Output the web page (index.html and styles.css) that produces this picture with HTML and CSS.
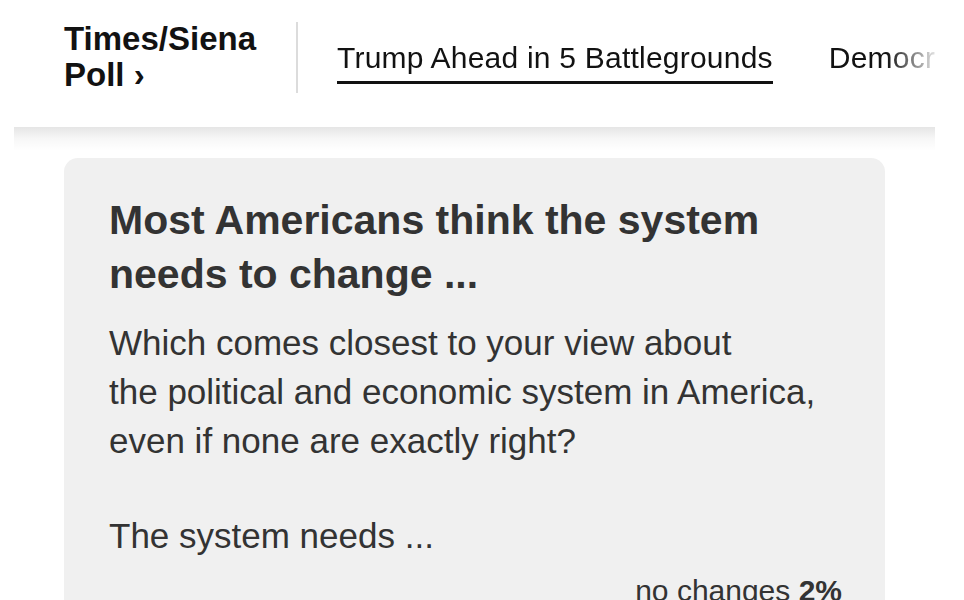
FILE: index.html
```html
<!DOCTYPE html>
<html lang="en">
<head>
<meta charset="utf-8">
<title>Times/Siena Poll</title>
<link rel="stylesheet" href="styles.css">
</head>
<body>
<div class="page">
  <header class="topbar">
    <a class="brand" href="#">Times/Siena<br>Poll <span class="chev">›</span></a>
    <div class="divider"></div>
    <nav class="tabs">
      <a class="tab active" href="#">Trump Ahead in 5 Battlegrounds</a>
      <a class="tab" href="#">Democrats’ Worries</a>
    </nav>
  </header>
  <section class="card">
    <h2 class="card-title">Most Americans think the system needs to change ...</h2>
    <p class="question">Which comes closest to your view about<br>the political and economic system in America,<br>even if none are exactly right?</p>
    <p class="lead">The system needs ...</p>
    <div class="result-label">no changes <b>2%</b></div>
  </section>
</div>
</body>
</html>
```
FILE: styles.css
```css
* { box-sizing: border-box; }
html, body { margin: 0; padding: 0; background: #fff; }
body {
  font-family: "Liberation Sans", Arial, sans-serif;
  color: #121212;
  overflow: hidden;
}
.page {
  padding: 0 29px 0 14px;
}
.topbar {
  position: relative;
  z-index: 2;
  height: 127px;
  background: #fff;
  display: flex;
  align-items: flex-start;
  padding: 21px 0 0 50px;
}
.topbar::after {
  content: "";
  position: absolute;
  left: 0;
  right: 0;
  top: 100%;
  height: 24px;
  background: linear-gradient(to bottom, rgba(0, 0, 0, 0.1), rgba(0, 0, 0, 0.03) 50%, rgba(0, 0, 0, 0));
  pointer-events: none;
}
.brand {
  flex: none;
  font-size: 33px;
  line-height: 36px;
  font-weight: 700;
  color: #121212;
  text-decoration: none;
}
.chev { font-weight: 700; }
.divider {
  flex: none;
  width: 2px;
  height: 71px;
  margin: 1px 39px 0 40px;
  background: #dcdcdc;
}
.tabs {
  flex: 1;
  min-width: 0;
  display: flex;
  gap: 56px;
  overflow: hidden;
  white-space: nowrap;
  padding-top: 19px;
  -webkit-mask-image: linear-gradient(to right, #000 calc(100% - 48px), rgba(0,0,0,0.12) 100%);
  mask-image: linear-gradient(to right, #000 calc(100% - 48px), rgba(0,0,0,0.12) 100%);
}
.tab {
  flex: none;
  font-size: 30px;
  line-height: 36px;
  letter-spacing: 0.22px;
  color: #121212;
  text-decoration: none;
  padding-bottom: 5px;
  border-bottom: 3px solid transparent;
}
.tab.active { border-bottom-color: #121212; }
.card {
  margin: 31px 50px 0 50px;
  background: #f0f0f0;
  border-radius: 14px;
  padding: 35px 43px 40px 45px;
  color: #333;
  min-height: 500px;
}
.card-title {
  margin: 0;
  font-size: 41px;
  line-height: 54px;
  font-weight: 700;
  color: #333;
}
.question {
  margin: 17px 0 0 0;
  font-size: 35px;
  line-height: 49px;
}
.lead {
  margin: 46px 0 0 0;
  font-size: 35px;
  line-height: 49px;
}
.result-label {
  margin-top: 13px;
  text-align: right;
  font-size: 30px;
  line-height: 36px;
}
.result-label b { font-weight: 700; }
```
